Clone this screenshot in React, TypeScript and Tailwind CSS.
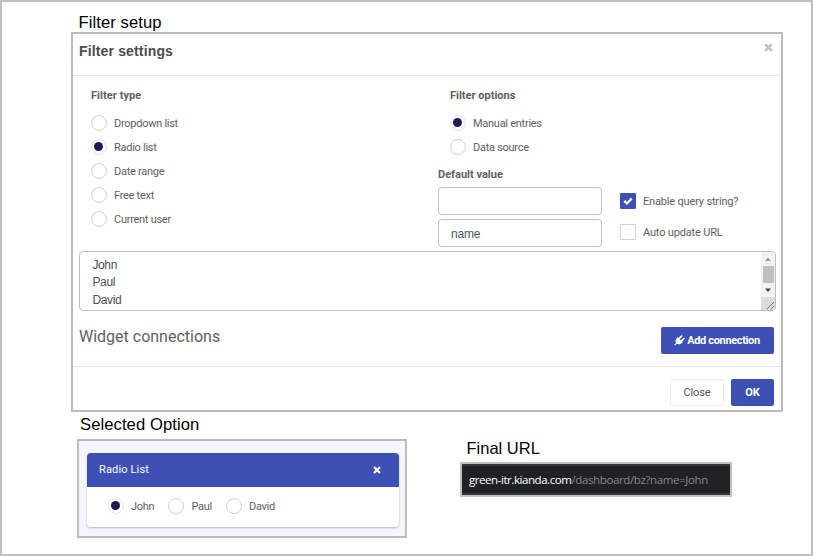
import React from "react";

type RadioProps = { label: string; checked?: boolean };

function Radio({ label, checked = false }: RadioProps) {
  return (
    <div className="flex h-6 items-center gap-[7px]">
      <span
        className={`flex size-4 shrink-0 items-center justify-center rounded-full border bg-white ${
          checked ? "border-[#e2e2e6]" : "border-[#cfcfcf]"
        }`}
      >
        {checked && <span className="-ml-px -mt-px size-[9px] rounded-full bg-[#171c58]" />}
      </span>
      <span className="whitespace-nowrap pt-px text-[11px] leading-4 tracking-[-0.27px]">{label}</span>
    </div>
  );
}

function Checkbox({ label, checked = false }: { label: string; checked?: boolean }) {
  return (
    <div className="flex h-4 items-center gap-[7px]">
      <span
        className={`flex size-4 shrink-0 items-center justify-center ${
          checked ? "rounded-[1px] bg-[#3e50b4]" : "border border-[#d3d3d3] bg-white"
        }`}
      >
        {checked && (
          <svg viewBox="0 0 10 8" className="h-2 w-2.5">
            <path d="M1.2 3.8 3.9 6.3 8.8 1.5" fill="none" stroke="#fff" strokeWidth="2.3" />
          </svg>
        )}
      </span>
      <span className="whitespace-nowrap pt-px text-[11px] leading-4 tracking-[-0.17px]">{label}</span>
    </div>
  );
}

function Cross({ className }: { className: string }) {
  return (
    <svg viewBox="0 0 8 8" className={className}>
      <path d="M1 1 7 7M7 1 1 7" fill="none" stroke="currentColor" strokeWidth="2.2" />
    </svg>
  );
}

function Plug() {
  return (
    <svg viewBox="0 0 12 12" className="size-[11px] shrink-0">
      <path
        d="M4.1 2.4 9.6 7.9 8.6 8.7C7 10.3 4.7 10.5 3 9.6L1.2 11.5.2 10.6 2.2 8.8C1.4 7 1.6 5 3.2 3.4Z"
        fill="#fff"
      />
      <path d="M5.5 3.9 8.3 1.2M8 6.6 11 3.8" stroke="#fff" strokeWidth="1.8" strokeLinecap="round" />
    </svg>
  );
}

function FilterModal() {
  return (
    <section className="ml-[69px] flex h-[380px] w-[712px] flex-col border-2 border-[#bcbcbc] bg-white text-[#606060]">
      <header className="flex h-[42px] shrink-0 justify-between border-b border-[#e6e6e6] pl-[6px] pr-[8px] pt-[7px]">
        <h2 className="font-['Liberation_Sans',Arial,sans-serif] text-[14px] font-bold leading-5 tracking-[0.15px] text-[#4c4c4c]">
          Filter settings
        </h2>
        <Cross className="mt-[2px] size-[9px] text-[#c2c2c2]" />
      </header>

      <div className="flex h-[175px] shrink-0">
        <div className="w-[365px] pl-[18px] pt-3">
          <h3 className="mb-[7px] text-[11px] font-bold leading-4 tracking-[0.05px]">Filter type</h3>
          <Radio label="Dropdown list" />
          <Radio label="Radio list" checked />
          <Radio label="Date range" />
          <Radio label="Free text" />
          <Radio label="Current user" />
        </div>
        <div className="pt-3">
          <div className="pl-3">
            <h3 className="mb-[7px] text-[11px] font-bold leading-4">Filter options</h3>
            <Radio label="Manual entries" checked />
            <Radio label="Data source" />
          </div>
          <h3 className="mt-2 text-[11px] font-bold leading-4">Default value</h3>
          <div className="mt-1 flex gap-[18px]">
            <div className="flex flex-col gap-1">
              <div className="h-7 w-[164px] rounded border border-[#bfc1c6]" />
              <div className="flex h-7 w-[164px] items-center rounded border border-[#b9c2cb] pl-3 pt-px font-['Liberation_Sans',Arial,sans-serif] text-[12px] tracking-[-0.2px] text-[#4c5563]">
                name
              </div>
            </div>
            <div className="flex flex-col gap-[15px] pt-[6px]">
              <Checkbox label="Enable query string?" checked />
              <Checkbox label="Auto update URL" />
            </div>
          </div>
        </div>
      </div>

      <div className="ml-[6px] flex h-[60px] w-[697px] shrink-0 justify-between overflow-hidden rounded border border-[#bfbfbf]">
        <div className="pl-[12.5px] pt-[5px] font-['Liberation_Sans',Arial,sans-serif] text-[12px] leading-[17.3px] tracking-[-0.4px] text-[#48515b]">
          <p>John</p>
          <p>Paul</p>
          <p>David</p>
        </div>
        <div className="flex w-[14px] flex-col items-center bg-[#f2f2f2]">
          <svg viewBox="0 0 14 14" className="h-[14px] w-[14px]">
            <path d="M4 9h6L7 5.5Z" fill="#9b9b9b" />
          </svg>
          <div className="h-[17px] w-[11px] bg-[#c0c0c0]" />
          <svg viewBox="0 0 14 14" className="h-[14px] w-[14px]">
            <path d="M4 5.5h6L7 9Z" fill="#404040" />
          </svg>
          <svg viewBox="0 0 14 13" className="h-[13px] w-[14px] bg-[#dcdcdc]">
            <path d="M5.5 12.5 13 5M9.5 12.5 13 9" stroke="#777" strokeWidth="1" fill="none" />
          </svg>
        </div>
      </div>

      <div className="flex h-[55px] shrink-0 justify-between pl-[6px] pr-[7px] pt-4">
        <h2 className="text-[16px] leading-5">Widget connections</h2>
        <button className="flex h-[27px] w-[113px] items-center justify-center gap-[2px] rounded-[2px] bg-[#3e50b4] pr-px text-[11px] font-bold text-white">
          <Plug />
          <span className="whitespace-nowrap pt-px tracking-[-0.35px]">Add connection</span>
        </button>
      </div>

      <footer className="flex flex-1 justify-end gap-[7px] border-t border-[#e8e8e8] pr-[7px] pt-3">
        <button className="h-[27px] w-[54px] rounded-[2px] border border-[#ececec] pt-px text-[11px] tracking-[-0.1px] text-[#505050]">
          Close
        </button>
        <button className="h-[27px] w-[43px] rounded-[2px] bg-[#3e50b4] pt-px text-[11px] font-bold text-white">
          OK
        </button>
      </footer>
    </section>
  );
}

function SelectedOption() {
  return (
    <section className="w-[330px]">
      <h1 className="pl-[3px] font-['Liberation_Sans',Arial,sans-serif] text-[16.6px] leading-5 tracking-[0.08px] text-black">
        Selected Option
      </h1>
      <div className="mt-1 h-[99px] border-2 border-[#bcbcbc] bg-[#f4f6fb] pl-2 pr-[6px] pt-3">
        <div className="h-[74px] overflow-hidden rounded bg-white shadow-[0_1px_2px_rgba(0,0,0,0.25)]">
          <div className="flex h-[34px] items-center justify-between bg-[#3e50b4] pl-3 pr-[18px] text-white">
            <span className="text-[11px] tracking-[0.15px]">Radio List</span>
            <Cross className="size-2" />
          </div>
          <div className="flex gap-[14px] pl-[21px] pt-[7px] text-[#606060]">
            <Radio label="John" checked />
            <Radio label="Paul" />
            <Radio label="David" />
          </div>
        </div>
      </div>
    </section>
  );
}

function FinalUrl() {
  return (
    <section className="mt-[23px] w-[272px]">
      <h1 className="pl-[6.5px] font-['Liberation_Sans',Arial,sans-serif] text-[16.5px] leading-5 text-black">
        Final URL
      </h1>
      <div className="mt-1 flex h-[35px] items-center whitespace-nowrap border-2 border-[#c0c0c0] bg-[#202124] pl-[7px] font-['Open_Sans',sans-serif] text-[11.5px] text-[#85888b] shadow-[inset_0_2px_0_#35363a,inset_0_-2px_0_#35363a]">
        <span className="tracking-[-0.44px] text-white">green-itr.kianda.com</span>
        <span className="tracking-[-0.38px]">/dashboard/bz?name=John</span>
      </div>
    </section>
  );
}

export default function App() {
  return (
    <main className="h-[556px] w-[813px] overflow-hidden border-2 border-[#c0c0c0] bg-white font-[Roboto,sans-serif]">
      <h1 className="pl-[76.5px] pt-[11px] font-['Liberation_Sans',Arial,sans-serif] text-[16.6px] leading-[19px] tracking-[0.08px] text-black">
        Filter setup
      </h1>
      <FilterModal />
      <div className="flex gap-[53px] pl-[75px] pt-[3px]">
        <SelectedOption />
        <FinalUrl />
      </div>
    </main>
  );
}
